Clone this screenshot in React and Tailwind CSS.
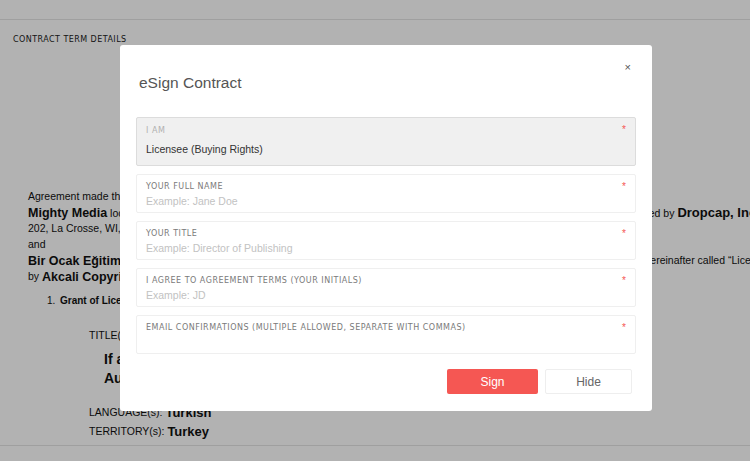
import React from 'react'

const LABEL = "font-['DejaVu_Sans',sans-serif] text-[8px] leading-[10px] tracking-[0.5px] uppercase"

function Field({ label, placeholder, value, disabled }) {
  return (
    <div
      className={
        disabled
          ? 'relative h-[49px] rounded-[2px] border border-[#dcdcdc] bg-[#f0f0f0] px-[9px] pt-[8px]'
          : 'relative h-[39px] rounded-[2px] border border-[#efefef] bg-white px-[9px] pt-[7px]'
      }
    >
      <div className={`${LABEL} ${disabled ? 'text-[#b0b0b0]' : 'text-[#7a7a7a]'}`}>{label}</div>
      {disabled ? (
        <div className="mt-[6px] text-[10.5px] leading-[14px] text-[#333]">{value}</div>
      ) : (
        <input
          className="mt-[2px] block h-[14px] w-full bg-transparent text-[10.5px] leading-[14px] text-[#333] outline-none placeholder:text-[#c2c2c2]"
          placeholder={placeholder}
        />
      )}
      <span className="absolute right-[9px] top-[6px] text-[10px] leading-[12px] text-[#f55753]">*</span>
    </div>
  )
}

export default function App() {
  return (
    <div className="relative h-[461px] w-full overflow-hidden bg-white font-['Liberation_Sans',Arial,sans-serif] text-[#111]">
      {/* page behind the dialog */}
      <div className="h-[20px] border-b border-[#e4e4e4]" />
      <div className="px-[13px] pt-[15px] font-['DejaVu_Sans',sans-serif] text-[8px] leading-[10px] tracking-[0.45px] text-[#222]">
        CONTRACT TERM DETAILS
      </div>

      <div className="mt-[144px] whitespace-nowrap pl-[28px] text-[10.5px]">
        <div className="flex h-[16px] items-center">Agreement made this day between the parties listed below</div>
        <div className="flex h-[16px] items-center">
          <span className="w-[612px] shrink-0"><b className="text-[12.5px]">Mighty Media</b> located at 1 Main Street, Suite</span>
          <span className="shrink-0">nted by <b className="text-[13px]">Dropcap, Inc.</b></span>
        </div>
        <div className="flex h-[16px] items-center">202, La Crosse, WI, 54601, USA</div>
        <div className="flex h-[16px] items-center">and</div>
        <div className="flex h-[16px] items-center">
          <span className="w-[613px] shrink-0"><b className="text-[12.5px]">Bir Ocak Eğitim</b> Yayınları located in Istanbul</span>
          <span className="shrink-0">(hereinafter called “Licensee”)</span>
        </div>
        <div className="flex h-[16px] items-center">
          by&nbsp;<b className="text-[12.5px]">Akcali Copyright Agency</b>
        </div>

        <div className="mt-[7px] flex h-[16px] items-center pl-[19px] text-[10px] font-bold">
          <span className="w-[13px] font-normal">1.</span>Grant of License
        </div>

        <div className="mt-[20px] flex h-[16px] items-center pl-[61px]">TITLE(s):</div>
        <div className="mt-[6px] flex h-[19px] items-center pl-[76px] text-[14px] font-bold">If a Tree Could Talk</div>
        <div className="flex h-[19px] items-center pl-[76px] text-[14px] font-bold">Author Name</div>
        <div className="mt-[15px] flex h-[19px] items-center pl-[61px]">
          LANGUAGE(s):&nbsp;<b className="text-[13px]">Turkish</b>
        </div>
        <div className="flex h-[19px] items-center pl-[61px]">
          TERRITORY(s):&nbsp;<b className="text-[13px]">Turkey</b>
        </div>
      </div>

      <div className="absolute inset-x-0 bottom-0 h-[16px] border-t border-[#e4e4e4] bg-white" />

      {/* overlay + dialog */}
      <div className="absolute inset-0 bg-black/30">
        <div className="ml-[120px] mt-[45px] h-[366px] w-[532px] rounded-[3px] bg-white px-[16px]">
          <div className="flex items-start justify-between">
            <h2 className="pl-[3px] pt-[28px] text-[15.5px] leading-[20px] text-[#555]">eSign Contract</h2>
            <button className="mr-[5px] mt-[16px] text-[11px] leading-[12px] text-[#555]">×</button>
          </div>

          <div className="mt-[24px] flex flex-col gap-[8px]">
            <Field label="I am" value="Licensee (Buying Rights)" disabled />
            <Field label="Your full name" placeholder="Example: Jane Doe" />
            <Field label="Your title" placeholder="Example: Director of Publishing" />
            <Field label="I agree to agreement terms (your initials)" placeholder="Example: JD" />
            <Field label="Email confirmations (multiple allowed, separate with commas)" placeholder="" />
          </div>

          <div className="mt-[15px] flex justify-end gap-[7px] pr-[4px]">
            <button className="h-[25px] w-[91px] rounded-[2px] bg-[#f55753] text-[12px] text-white">Sign</button>
            <button className="h-[25px] w-[87px] rounded-[2px] border border-[#eeeeee] bg-white text-[12px] text-[#666]">Hide</button>
          </div>
        </div>
      </div>
    </div>
  )
}
